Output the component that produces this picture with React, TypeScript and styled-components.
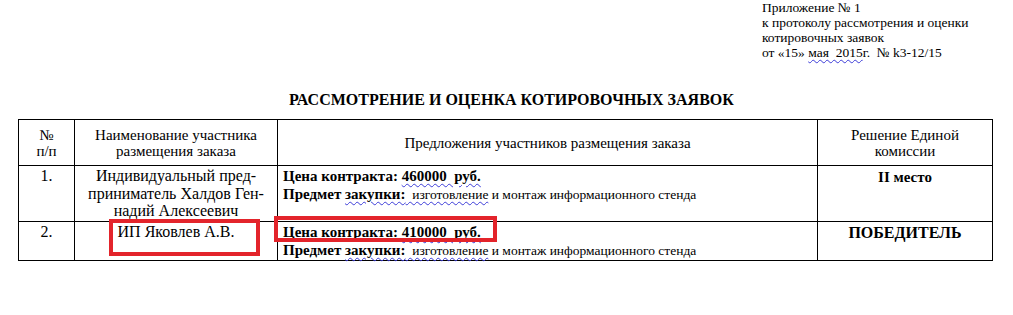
import styled, { createGlobalStyle } from 'styled-components';

const serif = `'Liberation Serif', 'Times New Roman', serif`;

const GlobalStyle = createGlobalStyle`
  html, body {
    margin: 0;
    padding: 0;
    background: #ffffff;
  }
  body {
    font-family: ${serif};
    color: #000000;
  }
`;

interface Offer {
  num: string;
  name: string[];
  price: string;
  decision: string;
  big?: boolean;
}

const offers: Offer[] = [
  {
    num: '1.',
    name: ['Индивидуальный пред-', 'приниматель Халдов Ген-', 'надий Алексеевич'],
    price: '460000  руб.',
    decision: 'II место'
  },
  {
    num: '2.',
    name: ['ИП Яковлев А.В.'],
    price: '410000  руб.',
    decision: 'ПОБЕДИТЕЛЬ',
    big: true
  }
];

const App = () => {
  return (
    <>
      <GlobalStyle />
      <Page>
        <Annex>
          <div>Приложение № 1</div>
          <div>к протоколу рассмотрения и оценки</div>
          <div>котировочных заявок</div>
          <div>
            от «15» <Spell>мая  2015</Spell>г.&nbsp;&nbsp;№ k3-12/15
          </div>
        </Annex>
        <Title>РАССМОТРЕНИЕ И ОЦЕНКА КОТИРОВОЧНЫХ ЗАЯВОК</Title>
        <Table>
          <colgroup>
            <col style={{ width: 56 }} />
            <col style={{ width: 203 }} />
            <col style={{ width: 540 }} />
            <col style={{ width: 175 }} />
          </colgroup>
          <thead>
            <tr>
              <HeadCell>
                №<br />п/п
              </HeadCell>
              <HeadCell>
                Наименование участника
                <br />
                размещения заказа
              </HeadCell>
              <HeadCell>Предложения участников размещения заказа</HeadCell>
              <HeadCell>
                Решение Единой
                <br />
                комиссии
              </HeadCell>
            </tr>
          </thead>
          <tbody>
            {offers.map((offer, index) => (
              <BodyRow key={index} $height={index === 0 ? 56 : 38}>
                <NumCell>{offer.num}</NumCell>
                <NameCell>
                  {offer.name.map((line) => (
                    <div key={line}>{line}</div>
                  ))}
                </NameCell>
                <OfferCell>
                  <OfferLine>
                    <b>Цена контракта: </b>
                    <Spell as="b">{offer.price}</Spell>
                  </OfferLine>
                  <OfferLine>
                    <b>Предмет </b>
                    <Spell>
                      <b>закупки:</b>
                      <Small>&nbsp;&nbsp;изготовление</Small>
                    </Spell>
                    <Small> и монтаж информационного стенда</Small>
                  </OfferLine>
                </OfferCell>
                <DecisionCell $big={offer.big}>{offer.decision}</DecisionCell>
              </BodyRow>
            ))}
          </tbody>
        </Table>
        <Highlight style={{ left: 109, top: 219, width: 151, height: 37 }} />
        <Highlight style={{ left: 274, top: 216, width: 223, height: 26 }} />
      </Page>
    </>
  );
};

export default App;

const Page = styled.div`
  position: relative;
  width: 1013px;
  height: 315px;
  overflow: hidden;
  box-sizing: border-box;
  font-family: ${serif};
`;

const Annex = styled.div`
  margin-left: 762px;
  font-size: 13.5px;
  line-height: 15px;
`;

const Title = styled.div`
  margin-top: 31px;
  text-align: center;
  font-weight: bold;
  font-size: 16px;
  line-height: 18px;
  padding-left: 10px;
`;

const Table = styled.table`
  margin: 10px 0 0 18px;
  width: 974px;
  border-collapse: collapse;
  table-layout: fixed;
  font-family: ${serif};

  td,
  th {
    border: 1px solid #000000;
    font-family: ${serif};
  }
`;

const HeadCell = styled.th`
  height: 45px;
  font-weight: normal;
  font-size: 15px;
  line-height: 16px;
  text-align: center;
  vertical-align: middle;
  padding: 0 2px;
`;

const BodyRow = styled.tr<{ $height: number }>`
  height: ${({ $height }) => $height}px;
  vertical-align: top;
`;

const NumCell = styled.td`
  text-align: center;
  font-size: 16px;
  line-height: 17.5px;
  padding-top: 1px;
`;

const NameCell = styled.td`
  text-align: center;
  font-size: 16px;
  line-height: 17.5px;
  padding-top: 1px;
`;

const OfferCell = styled.td`
  padding: 1px 5px 0;
  font-size: 15px;
  line-height: 18px;
`;

const OfferLine = styled.div`
  white-space: pre;
`;

const Small = styled.span`
  font-size: 13.5px;
  font-weight: normal;
`;

const Spell = styled.span`
  text-decoration: underline wavy #3c3cd8;
  text-decoration-thickness: 1px;
  text-underline-offset: 2px;
  white-space: pre;
`;

const DecisionCell = styled.td<{ $big?: boolean }>`
  text-align: center;
  font-weight: bold;
  font-size: ${({ $big }) => ($big ? '16px' : '15px')};
  line-height: 18px;
  padding-top: 2px;
`;

const Highlight = styled.div`
  position: absolute;
  border: 4px solid #e3242b;
  box-sizing: border-box;
  pointer-events: none;
`;
